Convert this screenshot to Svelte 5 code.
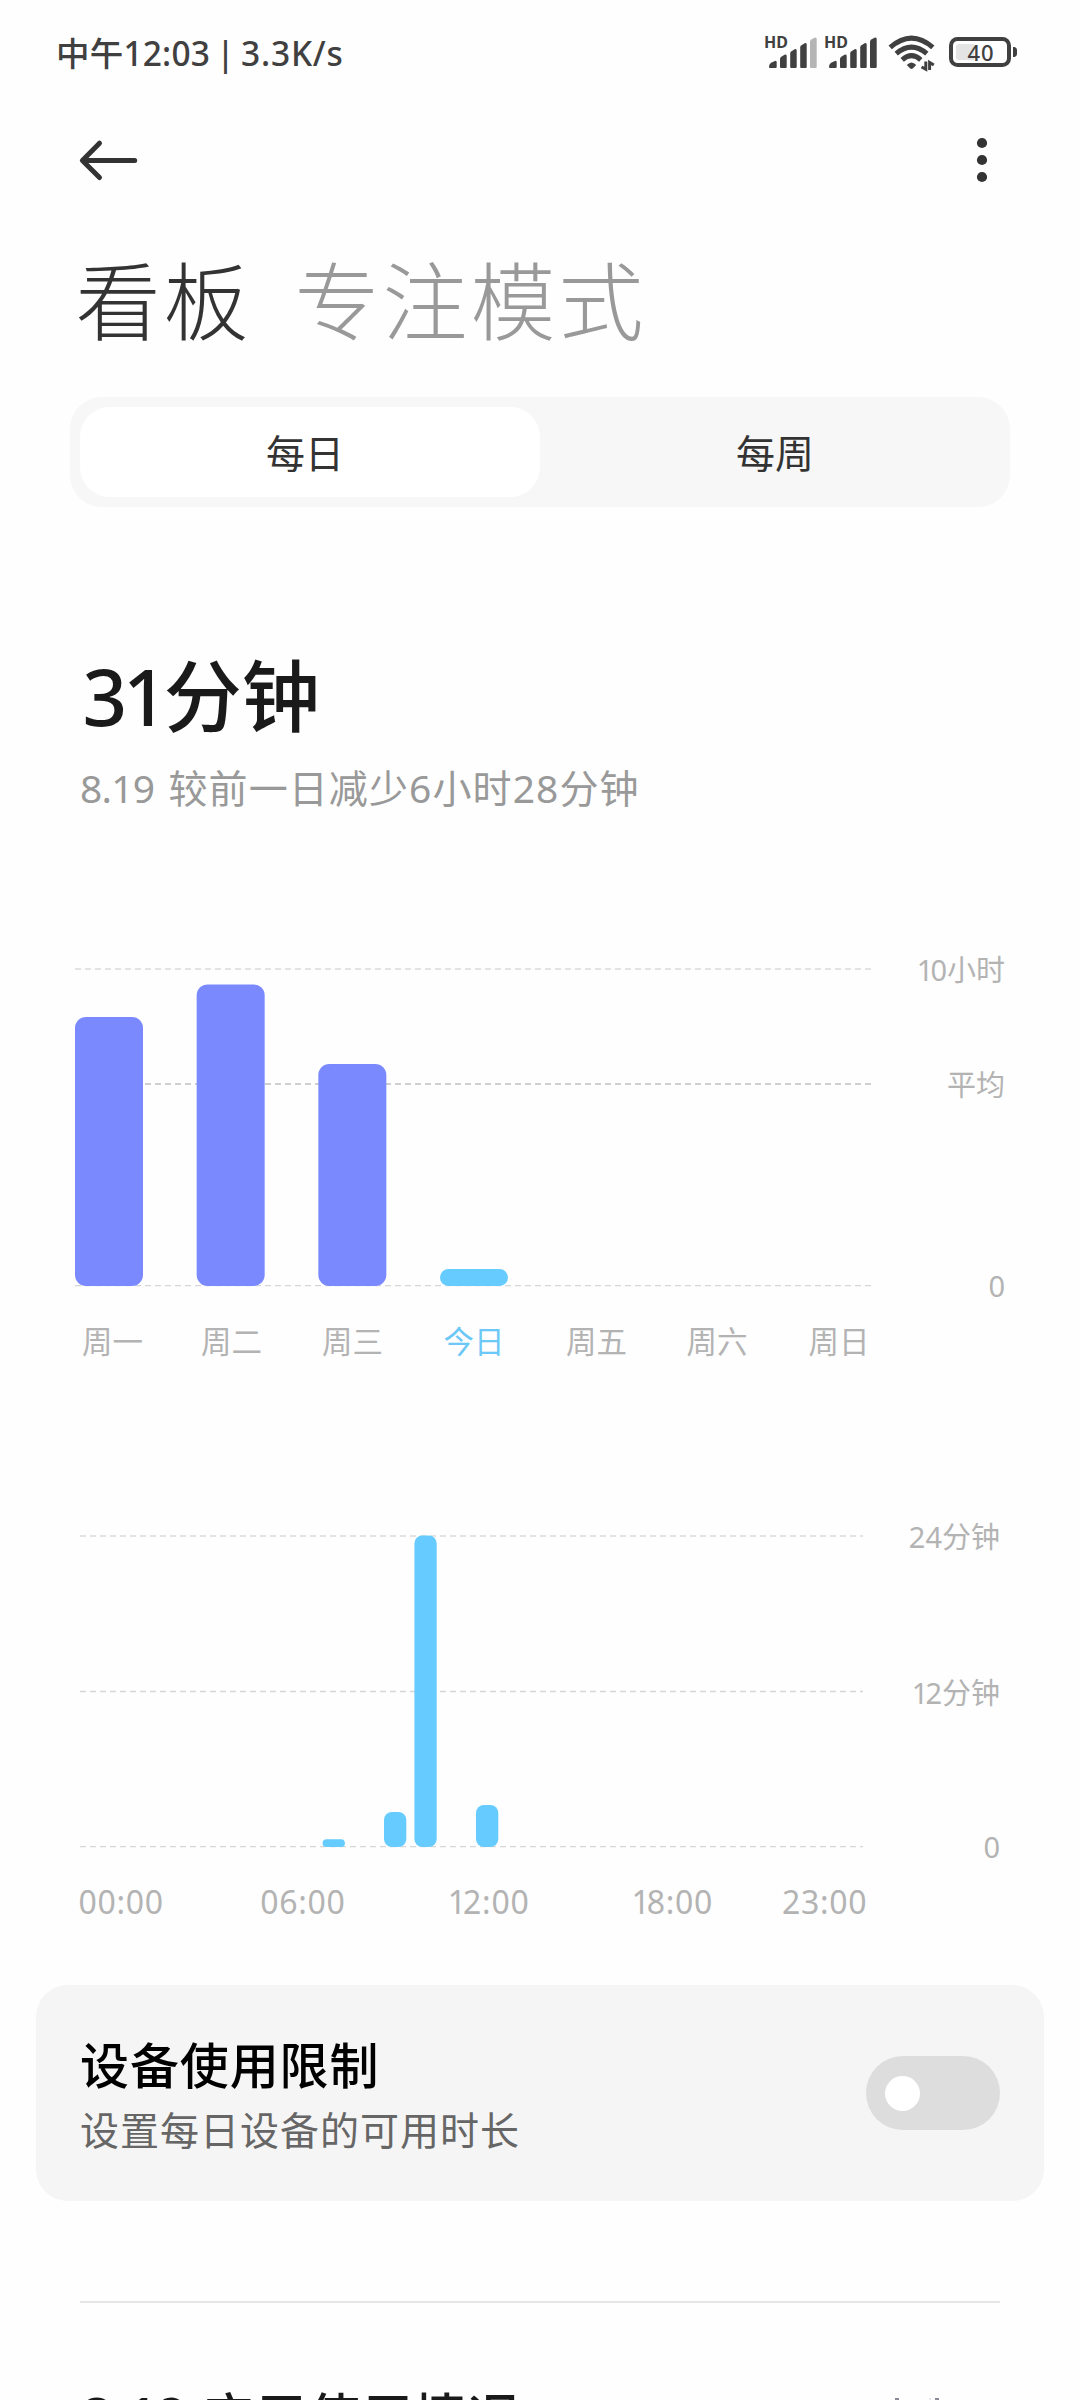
<script>
  // Daily totals: top edge of each bar inside the plot, in px
  const days = [
    { label: '周一', x: 0, top: 49, labelX: 37.5 },
    { label: '周二', x: 121.67, top: 16.4, labelX: 156.5 },
    { label: '周三', x: 243.33, top: 96, labelX: 277.5 },
    { label: '今日', x: 365, top: 301, labelX: 399, today: true },
    { label: '周五', labelX: 521.5 },
    { label: '周六', labelX: 642 },
    { label: '周日', labelX: 764 }
  ];
  const hours = [
    { x: 242.6, top: 304.3, r: 4 },
    { x: 304, top: 277, r: 8 },
    { x: 334.4, top: 0.5, r: 8 },
    { x: 396, top: 270, r: 8 }
  ];
  // The narrow leading "1" is set apart so that it can be kerned
  const hourLabels = [
    { one: '', label: '00:00', x: -1.6 },
    { one: '', label: '06:00', x: 180.2 },
    { one: '1', label: '2:00', x: 367.8 },
    { one: '1', label: '8:00', x: 551.5 },
    { one: '', label: '23:00', x: 702 }
  ];
  const signals = [{ weak: true }, { weak: false }];
</script>

<div class="screen">
  <header class="status">
    <span class="clock">中午12:03 | <span class="rate">3.3K/s</span></span>
    <div class="indicators">
      {#each signals as s}
        <svg class="signal" width="50" height="34" viewBox="0 0 50 34">
          <text class="hd" x="-3" y="13.200">HD</text>
          <path d="M2 31.5Q2 29 4.5 27.6L8 26Q9.7 25.3 9.7 27.5V32Q9.7 33 8.7 33H3Q2 33 2 32Z" />
          <path d="M13 24Q13 22.5 14.3 21.7L17.5 19.8Q19.7 18.8 19.7 21V32Q19.7 33 18.7 33H14Q13 33 13 32Z" />
          <path d="M23.2 18.5Q23.2 17 24.5 16.2L27.6 14.3Q29.7 13.3 29.7 15.5V32Q29.7 33 28.7 33H24.2Q23.2 33 23.2 32Z" />
          <path d="M33.2 12.5Q33.2 11 34.5 10.2L37.6 8.3Q39.7 7.3 39.7 9.5V32Q39.7 33 38.7 33H34.2Q33.2 33 33.2 32Z" />
          <path class:weak={s.weak} d="M43 7Q43 5.5 44.3 4.6L47.5 2.7Q49.7 1.7 49.7 4V32Q49.7 33 48.7 33H44Q43 33 43 32Z" />
        </svg>
      {/each}
      <svg class="wifi" width="48" height="36" viewBox="0 0 48 36">
        <g fill="none" stroke="#404040" stroke-width="5">
          <path d="M2.2 12.4Q23.5 -6.2 44.8 12.4" />
          <path d="M8.2 18.6Q23.5 5.6 38.8 18.6" />
          <path d="M14.2 24.8Q23.5 16.4 32.8 24.8" />
        </g>
        <path fill="#404040" d="M18.8 30Q23.5 25 28.2 30L25 33.3Q23.5 34.8 22 33.3Z" />
        <path fill="none" stroke="#404040" stroke-width="3" d="M37.800 26.500V34.200L33.500 32M41.600 35V27.500L45.800 30" />
      </svg>
      <svg class="battery" width="69" height="30" viewBox="0 0 69 30">
        <rect x="2" y="2" width="58" height="26" rx="6.500" fill="none" stroke="#404040" stroke-width="4" />
        <path fill="#e4e4e4" d="M25 7V23H9.500Q7 23 7 20.500V9.500Q7 7 9.500 7Z" />
        <path fill="#404040" d="M64 10H65.500Q68 10.500 68 13V17Q68 19.500 65.500 20H64Z" />
        <text class="level" x="32" y="23.800" text-anchor="middle">40</text>
      </svg>
    </div>
  </header>

  <nav class="toolbar">
    <svg width="60" height="44" viewBox="0 0 60 44" fill="none" stroke="#333" stroke-width="5" stroke-linecap="round" stroke-linejoin="round">
      <path d="M54.700 22.400H2.600M19.500 5.200L2.400 22.400L19.500 39.500" />
    </svg>
    <svg width="12" height="46" viewBox="0 0 12 46" fill="#333">
      <circle cx="6" cy="6" r="5.100" /><circle cx="6" cy="23" r="5.100" /><circle cx="6" cy="40" r="5.100" />
    </svg>
  </nav>

  <div class="titles">
    <h1>看板</h1>
    <h1 class="inactive">专注模式</h1>
  </div>

  <div class="segmented">
    <div class="segment active">每日</div>
    <div class="segment">每周</div>
  </div>

  <section class="summary">
    <div class="total"><span class="number">31</span>分钟</div>
    <div class="compare"><span class="date">8.19</span> 较前一日减少6小时28分钟</div>
  </section>

  <svg class="week" width="940" height="400" viewBox="0 -20 940 400">
    <line class="grid" x1="0" x2="796" y1="1" y2="1" />
    <line class="grid average" x1="0" x2="796" y1="116" y2="116" />
    <line class="grid thin" x1="0" x2="796" y1="317.700" y2="317.700" />
    {#each days as d}
      {#if d.top !== undefined}
        <rect class="bar" class:today={d.today} x={d.x} y={d.top} width="68" height={318 - d.top} rx={d.today ? 8.5 : 11} />
      {/if}
      <text class="day" class:today={d.today} x={d.labelX} y="385.200" text-anchor="middle">{d.label}</text>
    {/each}
    <text class="axis" x="930" y="12.600" text-anchor="end"><tspan class="one">1</tspan>0小时</text>
    <text class="axis" x="930" y="127.500" text-anchor="end">平均</text>
    <text class="axis" x="930" y="329" text-anchor="end">0</text>
  </svg>

  <svg class="hourly" width="930" height="400" viewBox="0 -20 930 400">
    <line class="grid" x1="0" x2="783" y1="1" y2="1" />
    <line class="grid thin" x1="0" x2="783" y1="156.500" y2="156.500" />
    <line class="grid thin" x1="0" x2="783" y1="311.600" y2="311.600" />
    {#each hours as h}
      <rect class="bar today" x={h.x} y={h.top} width="22.300" height={312 - h.top} rx={h.r} />
    {/each}
    {#each hourLabels as h}
      <text class="hour" x={h.x} y="379.300"><tspan class="one">{h.one}</tspan>{h.label}</text>
    {/each}
    <text class="axis" x="920" y="12.600" text-anchor="end">24分钟</text>
    <text class="axis" x="920" y="168.600" text-anchor="end"><tspan class="one">1</tspan>2分钟</text>
    <text class="axis" x="920" y="322.500" text-anchor="end">0</text>
  </svg>

  <section class="card">
    <div class="card-text">
      <div class="card-title">设备使用限制</div>
      <div class="card-sub">设置每日设备的可用时长</div>
    </div>
    <div class="switch"><div class="knob"></div></div>
  </section>

  <div class="divider"></div>

  <section class="usage">
    <div class="usage-title"><span class="usage-date">8.19</span> 应用使用情况</div>
    <svg width="50" height="2" viewBox="0 0 50 2" fill="#8a8a9a">
      <rect x="0" width="4" height="2" /><rect x="34" width="2" height="2" opacity="0.2" /><rect x="40" width="4" height="2" />
    </svg>
  </section>
</div>

<style>
  :global(body) {
    background: #fefefe;
    overflow: hidden;
  }
  .screen {
    width: 1080px;
    height: 2400px;
    overflow: hidden;
    box-sizing: border-box;
    display: flex;
    flex-direction: column;
    background: #fefefe;
    font-family: 'Noto Sans', 'Noto Sans CJK SC', sans-serif;
    color: #333;
    white-space: nowrap;
  }
  svg {
    display: block;
    flex: none;
    overflow: visible;
  }
  .status {
    display: flex;
    justify-content: space-between;
    height: 106px;
    padding: 0 62px 0 56px;
    flex: none;
    color: #404040;
  }
  .clock {
    line-height: 106px;
    font-size: 33.5px;
    font-weight: 500;
    letter-spacing: 0.2px;
    word-spacing: -2.8px;
  }
  .rate {
    letter-spacing: 0.8px;
  }
  .indicators {
    display: flex;
    padding-top: 35px;
  }
  .signal {
    fill: #404040;
    margin-right: 10px;
  }
  .signal .weak {
    fill: #b5b5b5;
  }
  .hd {
    font-size: 16px;
    font-weight: 700;
  }
  .wifi {
    margin-left: 1px;
    margin-right: 13px;
  }
  .battery {
    margin-top: 2px;
  }
  .level {
    font-size: 22px;
    font-weight: 500;
    letter-spacing: 1px;
    fill: #404040;
  }
  .toolbar {
    display: flex;
    justify-content: space-between;
    align-items: center;
    height: 108px;
    padding: 0 92px 0 80px;
    flex: none;
  }
  .titles {
    display: flex;
    gap: 43px;
    height: 183px;
    padding-left: 75.5px;
    flex: none;
  }
  h1 {
    margin: 0;
    line-height: 175px;
    font-size: 85px;
    font-weight: 300;
    letter-spacing: 3px;
  }
  h1.inactive {
    color: #999;
  }
  .segmented {
    display: flex;
    width: 940px;
    height: 110px;
    margin-left: 70px;
    padding: 10px 0;
    box-sizing: border-box;
    border-radius: 32px;
    background: #f7f7f7;
    flex: none;
  }
  .segment {
    width: 470px;
    box-sizing: border-box;
    text-align: center;
    font-size: 39px;
    line-height: 91px;
  }
  .segment.active {
    width: 460px;
    margin-left: 10px;
    padding-right: 10px;
    border-radius: 30px;
    background: #fff;
  }
  .summary {
    box-sizing: border-box;
    height: 441px;
    padding: 135px 0 0 80px;
    flex: none;
  }
  .total {
    font-size: 78px;
    font-weight: 500;
    line-height: 108px;
    color: #1a1a1a;
    padding-left: 2.5px;
  }
  .number {
    letter-spacing: -4px;
  }
  .compare {
    font-size: 39px;
    line-height: 60px;
    margin-top: 8px;
    letter-spacing: 1.1px;
    color: #999;
  }
  .date {
    letter-spacing: -0.8px;
    margin-right: 3px;
  }
  .week {
    margin-left: 75px;
  }
  .hourly {
    margin: 167px 0 0 80px;
  }
  .grid {
    stroke: #e3e3e3;
    stroke-width: 2;
    stroke-dasharray: 6 4;
  }
  .grid.average {
    stroke: #cfcfcf;
  }
  .grid.thin {
    stroke: #d6d6d6;
    stroke-width: 1.3;
  }
  .bar {
    fill: #7b89ff;
  }
  .bar.today {
    fill: #66ccff;
  }
  .day {
    font-size: 30.5px;
    fill: #b3b3b3;
  }
  .day.today {
    fill: #6cc8f6;
  }
  .axis {
    font-size: 29px;
    fill: #b3b3b3;
  }
  .hour {
    font-size: 32px;
    letter-spacing: 0.7px;
    fill: #b3b3b3;
  }
  .one {
    letter-spacing: -3px;
  }
  .card {
    display: flex;
    justify-content: space-between;
    align-items: center;
    width: 1008px;
    height: 216px;
    margin: 70px 0 0 36px;
    padding: 0 44px;
    box-sizing: border-box;
    border-radius: 32px;
    background: #f5f5f5;
    flex: none;
  }
  .card-title {
    font-size: 49px;
    font-weight: 500;
    line-height: 72px;
    letter-spacing: 0.9px;
    color: #000;
  }
  .card-sub {
    font-size: 39px;
    line-height: 57px;
    letter-spacing: 1px;
    color: #666;
  }
  .switch {
    width: 134px;
    height: 74px;
    padding: 0 19px;
    box-sizing: border-box;
    border-radius: 37px;
    background: #ddd;
    display: flex;
    align-items: center;
  }
  .knob {
    width: 35px;
    height: 35px;
    border-radius: 50%;
    background: #fff;
  }
  .divider {
    width: 920px;
    height: 2px;
    margin: 100px 0 0 80px;
    background: #e5e5e5;
    flex: none;
  }
  .usage {
    display: flex;
    justify-content: space-between;
    padding: 78px 135px 0 81px;
    height: 97px;
    box-sizing: border-box;
    overflow: hidden;
    flex: none;
  }
  .usage svg {
    margin-top: 17px;
  }
  .usage-title {
    font-size: 52px;
    font-weight: 500;
    line-height: 72px;
    letter-spacing: 1.2px;
    color: #1a1a1a;
  }
  .usage-date {
    font-size: 55px;
    font-weight: 600;
    line-height: 1;
    letter-spacing: -1px;
  }
</style>
